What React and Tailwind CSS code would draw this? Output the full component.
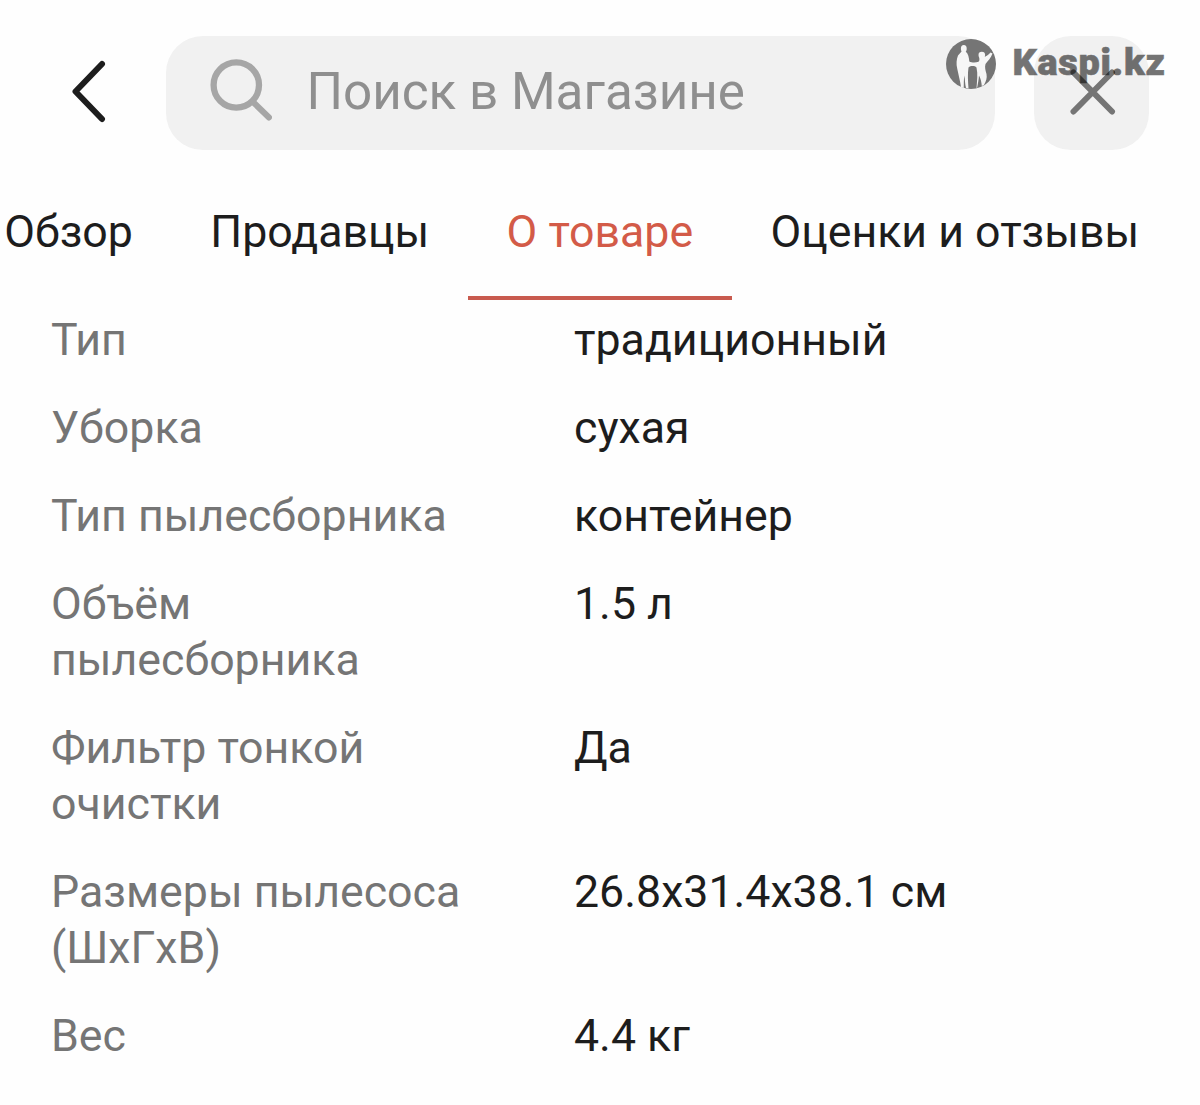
import React from 'react';

const tabs = [
    { id: 'overview', label: 'Обзор' },
    { id: 'sellers', label: 'Продавцы' },
    { id: 'about', label: 'О товаре' },
    { id: 'reviews', label: 'Оценки и отзывы' },
];

const specs = [
    { name: 'Тип', value: 'традиционный' },
    { name: 'Уборка', value: 'сухая' },
    { name: 'Тип пылесборника', value: 'контейнер' },
    { name: 'Объём пылесборника', value: '1.5 л' },
    { name: 'Фильтр тонкой очистки', value: 'Да' },
    { name: 'Размеры пылесоса (ШxГxВ)', value: '26.8x31.4x38.1 см' },
    { name: 'Вес', value: '4.4 кг' },
];

const KaspiMark = () => (
    <svg viewBox="0 0 50 50" className="w-[50px] h-[50px] shrink-0">
        <circle cx="25" cy="25" r="25" fill="#757575" />
        {/* Adult and child holding hands */}
        <g fill="#f6f6f6">
            <ellipse cx="17.800" cy="9.700" rx="2.900" ry="3.700" />
            <path d="M16 12 19.500 12.500C22.300 14.500 23 18.500 23.300 22.500C26 24 30 23.800 32.500 22.800C34 21.500 33.300 19 33 17.500L37.500 17.800C40 18 42 16 44.500 13.500L46.500 14.500C45 19 42 21.500 39.500 25C38.500 28 39.500 32 40.500 35C41.300 39 40 42.500 38 46L35.800 47C35.500 43 34.800 40 33 36.500C32.800 40 32 44 31.200 48.500L30.500 49C31 42 32 35 30.500 28.500C28.500 26.500 24.500 26.700 22.500 28.500C21.500 35 22 42 22.500 49.500L20 49C19 45 19 41 18.500 36.500C17.500 41 18 45 17.700 49L15 48C14 41 12.500 36 11.300 30C10 25 10.500 20 12 16.500Z" />
            <circle cx="35.800" cy="16" r="3.300" />
        </g>
    </svg>
);

const Header = () => (
    <div className="relative flex items-center pt-9 pl-[70px]">
        <button type="button" aria-label="Назад" className="w-9 h-[66px]">
            <svg viewBox="0 0 36 66" className="w-9 h-[66px]" fill="none" stroke="#1d1d1d" strokeWidth="6" strokeLinecap="round" strokeLinejoin="round">
                <path d="M32 4 5.500 31.500 32 59" />
            </svg>
        </button>

        <div className="ml-[60px] flex h-[114px] w-[829px] items-center rounded-[37px] bg-[#f1f1f1] pl-11">
            <svg viewBox="0 0 62 62" className="w-[62px] h-[62px] mb-1.5" fill="none" stroke="#a6a6a6" strokeLinecap="round">
                <circle cx="26.300" cy="26" r="22.700" strokeWidth="6.300" />
                <path d="M43 43 59 58.500" strokeWidth="6" />
            </svg>
            <span className="ml-[34.500px] mb-[2px] text-[51.200px] leading-none text-[#8f8f8f]">Поиск в Магазине</span>
        </div>

        <button type="button" aria-label="Закрыть" className="ml-[39px] flex h-[114px] w-[115px] items-center justify-center rounded-[37px] bg-[#f1f1f1]">
            <svg viewBox="0 0 46 46" className="w-[46px] h-[46px] mb-[3px] ml-[2px]" fill="none" stroke="#757575" strokeWidth="6" strokeLinecap="round">
                <path d="M3.500 3.500 42 42.500M42 3.500 3.500 42.500" />
            </svg>
        </button>

        {/* Watermark */}
        <div className="absolute top-[39px] left-[946px] flex items-start">
            <KaspiMark />
            <span className="ml-[16.500px] text-[37.800px] leading-[47px] font-black tracking-[0.8px] text-black opacity-54 [-webkit-text-stroke:0.7px_black]">Kaspi.kz</span>
        </div>
    </div>
);

export default function App() {
    return (
        <div className="h-[1105px] w-[1200px] overflow-hidden bg-[#fefefe] font-['Roboto',sans-serif] text-[#1d1d1d]">
            <Header />

            <div className="mt-[14px] -ml-[34.500px] flex h-[136px] text-[44.700px]">
                {tabs.map((tab) => (
                    <div
                        key={tab.id}
                        className={`flex shrink-0 items-center whitespace-nowrap border-b-4 px-[38.700px] pt-[5px] ${
                            tab.id === 'about'
                                ? 'border-[#c85a4e] text-[#d35b48]'
                                : 'border-transparent'
                        }`}
                    >
                        {tab.label}
                    </div>
                ))}
            </div>

            <div className="mt-3 flex flex-col gap-8 pl-[51px] text-[44.700px] leading-[56px]">
                {specs.map((spec) => (
                    <div key={spec.name} className="flex">
                        <div className="w-[523px] pr-[90px] text-[#757575]">{spec.name}</div>
                        <div>{spec.value}</div>
                    </div>
                ))}
            </div>
        </div>
    );
}
